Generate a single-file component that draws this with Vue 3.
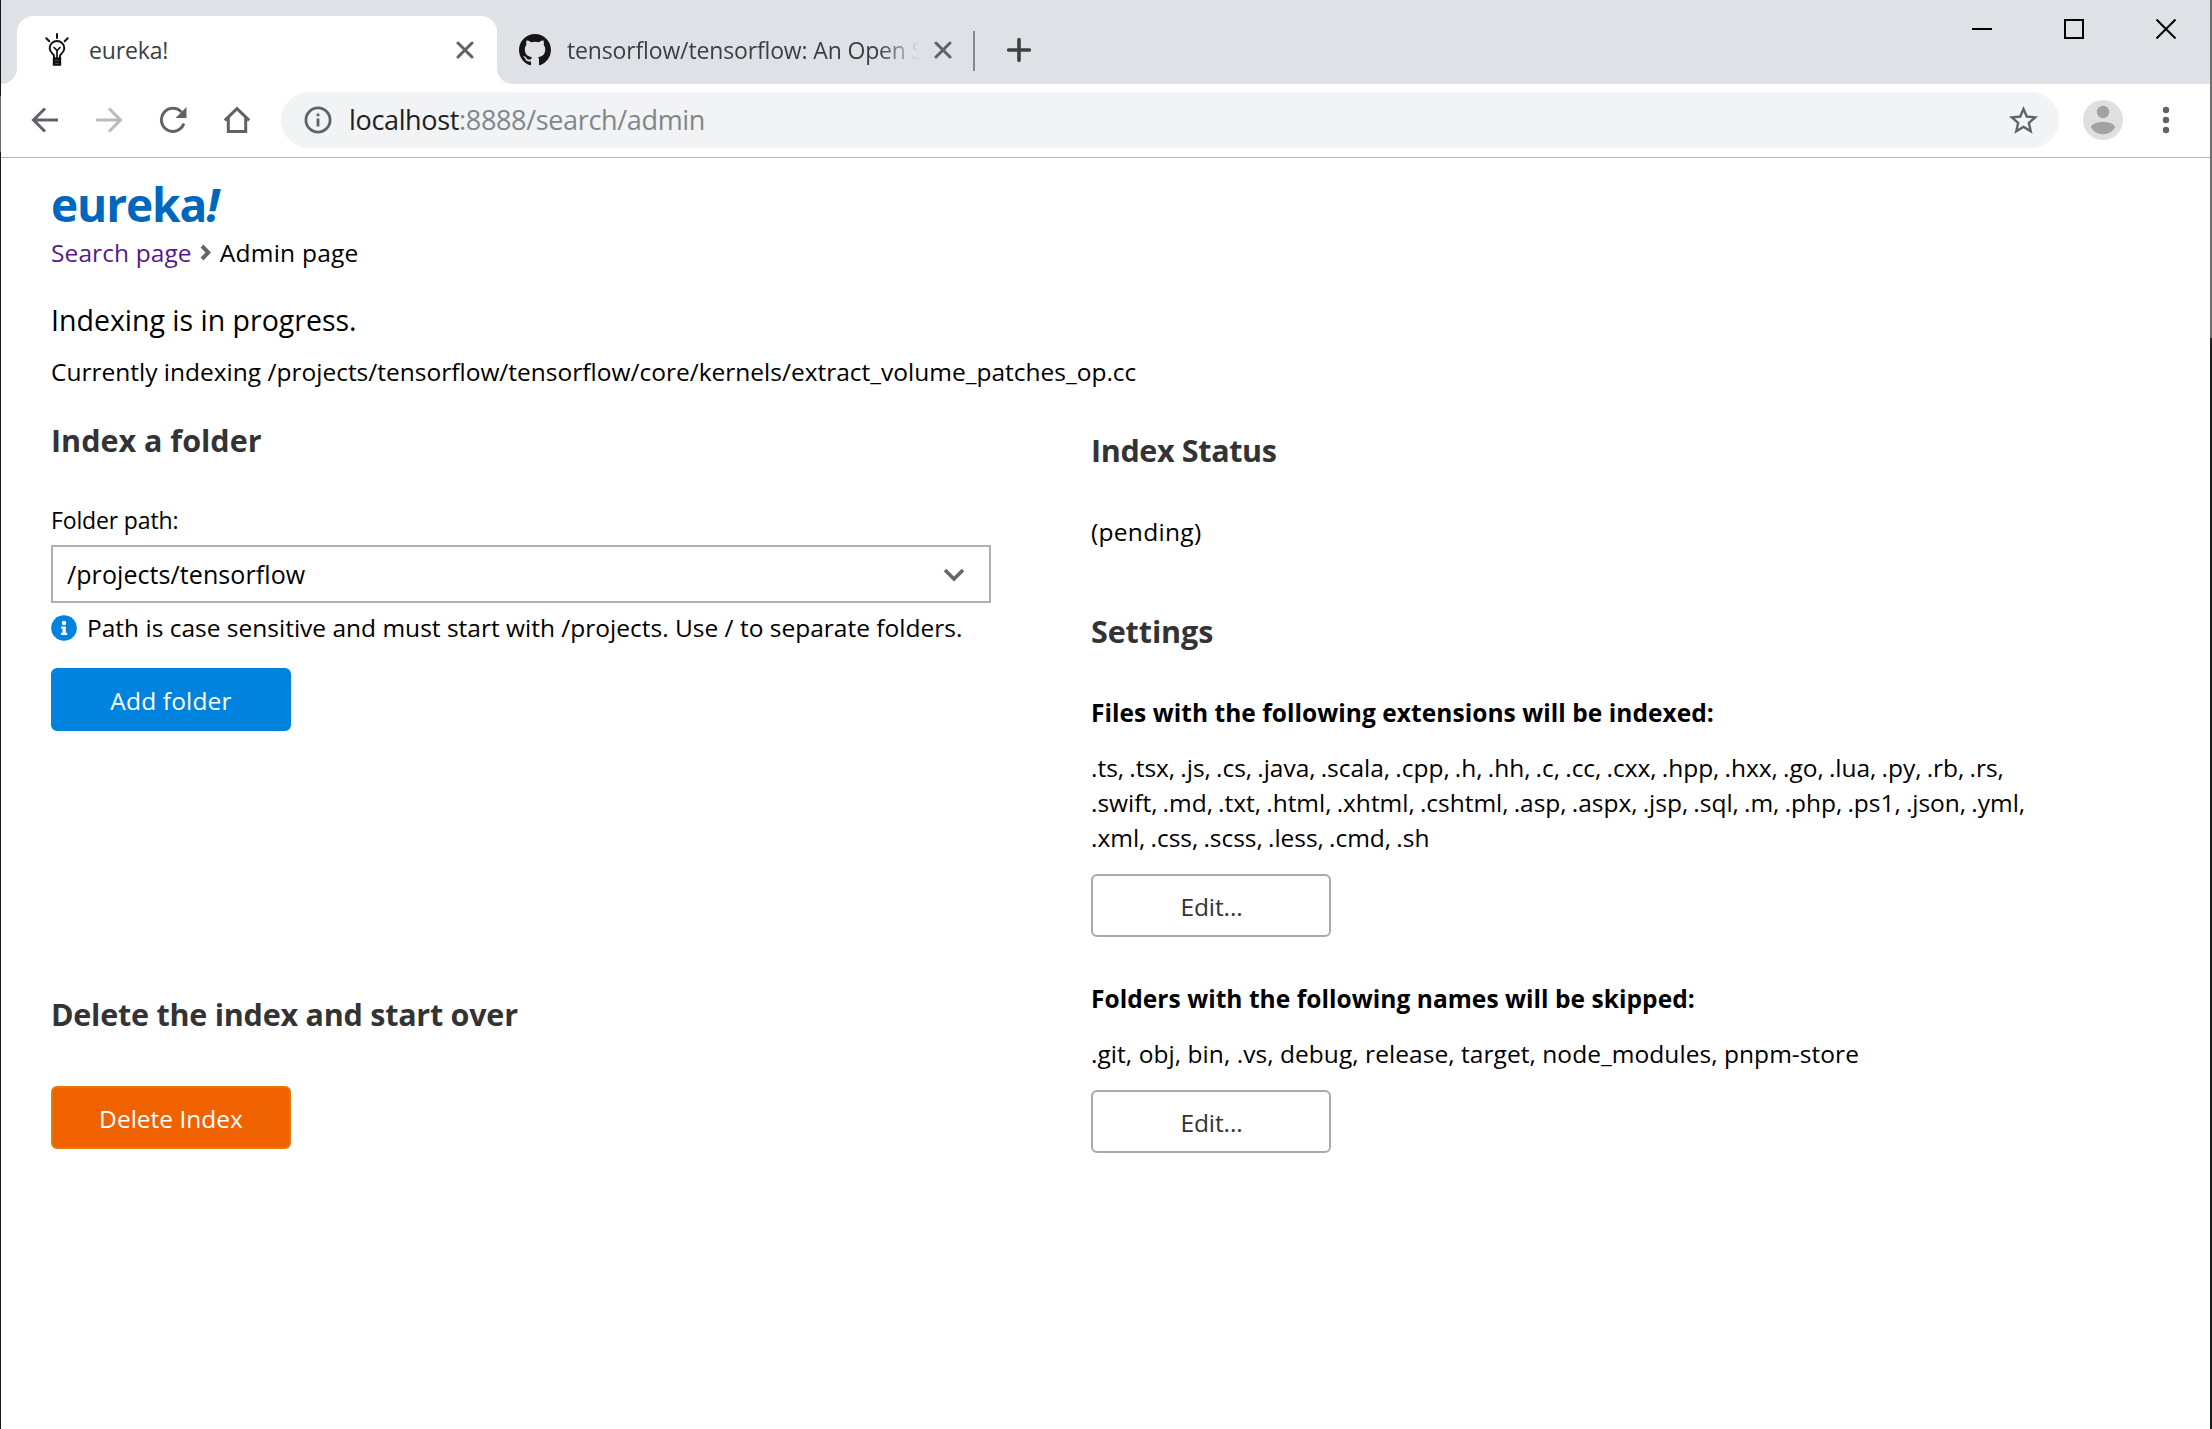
<script setup>
import { ref } from 'vue'

const folderPath = ref('/projects/tensorflow')
const extensions =
  '.ts, .tsx, .js, .cs, .java, .scala, .cpp, .h, .hh, .c, .cc, .cxx, .hpp, .hxx, .go, .lua, .py, .rb, .rs, .swift, .md, .txt, .html, .xhtml, .cshtml, .asp, .aspx, .jsp, .sql, .m, .php, .ps1, .json, .yml, .xml, .css, .scss, .less, .cmd, .sh'
const skipped = '.git, obj, bin, .vs, debug, release, target, node_modules, pnpm-store'
</script>

<template>
  <div class="window">
    <header class="tabstrip">
      <div class="tab active">
        <svg class="favicon bulb" viewBox="0 0 24 34" fill="none" stroke="#111" stroke-width="2" stroke-linecap="round">
          <path d="M12 1v4M1.3 5.3l3 3M22.7 5.3l-3 3" />
          <path d="M9 25.5v-2.8C8.600 20.800 4.700 19.500 4.700 15.300a7.300 7.300 0 0 1 14.600 0c0 4.200-3.900 5.500-4.300 7.400v2.800z" />
          <path d="M9 14.500l3 3 3-3M12 17.500v7" stroke-width="1.700" />
          <path d="M9 26h6v5.500H9zM9 28.800h6" stroke-width="2.400" />
        </svg>
        <span class="tab-title first">eureka!</span>
        <svg class="tab-close" viewBox="0 0 18 18"><path d="M2 2l14 14M16 2L2 16" /></svg>
      </div>
      <div class="tab background">
        <svg class="favicon github" viewBox="0 0 16 16" fill="#171515">
          <path d="M8 0C3.580 0 0 3.580 0 8c0 3.540 2.290 6.530 5.470 7.590.4.070.55-.17.55-.38 0-.19-.01-.82-.01-1.490-2.010.37-2.530-.49-2.690-.94-.09-.23-.48-.94-.82-1.130-.28-.15-.68-.52-.01-.53.63-.01 1.080.58 1.230.82.72 1.210 1.870.87 2.330.66.07-.52.28-.87.51-1.070-1.780-.2-3.640-.89-3.640-3.950 0-.87.31-1.590.82-2.150-.08-.2-.36-1.020.08-2.120 0 0 .67-.21 2.200.82.64-.18 1.320-.27 2-.27s1.360.09 2 .27c1.530-1.040 2.200-.82 2.200-.82.44 1.100.16 1.920.08 2.120.51.56.82 1.270.82 2.150 0 3.070-1.870 3.750-3.650 3.950.29.25.54.73.54 1.480 0 1.070-.01 1.930-.01 2.200 0 .21.15.46.55.38A8.010 8.010 0 0 0 16 8c0-4.420-3.580-8-8-8z" />
        </svg>
        <span class="tab-title second">tensorflow/tensorflow: An Open S</span>
        <svg class="tab-close" viewBox="0 0 18 18"><path d="M2 2l14 14M16 2L2 16" /></svg>
      </div>
      <span class="separator"></span>
      <svg class="new-tab" viewBox="0 0 24 24"><path d="M12 1.700v20.600M1.700 12h20.600" /></svg>
      <div class="controls">
        <svg viewBox="0 0 20 20"><path d="M0 10h20" /></svg>
        <svg viewBox="0 0 20 20"><path d="M1 1h18v18H1z" /></svg>
        <svg viewBox="0 0 20 20"><path d="M.5.5l19 19M19.500.5l-19 19" /></svg>
      </div>
    </header>

    <nav class="toolbar">
      <svg class="nav-icon" viewBox="0 0 28 28"><path d="M27 14H3M14 2.500L2.500 14 14 25.500" /></svg>
      <svg class="nav-icon disabled" viewBox="0 0 28 28"><path d="M1 14h24M14 2.500L25.500 14 14 25.500" /></svg>
      <svg class="nav-icon" viewBox="0 0 28 28">
        <path d="M24.800 17.500A11.500 11.500 0 1 1 22.400 6.100" />
        <path d="M27.500 1v11h-11z" fill="#5f6368" stroke="none" />
      </svg>
      <svg class="nav-icon" viewBox="0 0 28 28"><path d="M1.800 14.300L14 2.600l12.200 11.700M5.300 11.500v14h17.400v-14" /></svg>
      <div class="omnibox">
        <svg class="site-info" viewBox="0 0 28 28">
          <circle cx="14" cy="14" r="12.100" fill="none" stroke="#5f6368" stroke-width="2.800" />
          <path d="M12.600 12.500h2.800v8h-2.800zM12.600 7.500h2.800v2.800h-2.800z" fill="#5f6368" />
        </svg>
        <span class="url">localhost<span class="path">:8888/search/admin</span></span>
        <svg class="star" viewBox="0 0 24 24">
          <path fill="#5f6368" d="M22 9.240l-7.190-.62L12 2 9.190 8.630 2 9.240l5.460 4.730L5.820 21 12 17.270 18.180 21l-1.630-7.030L22 9.240zM12 15.400l-3.760 2.270 1-4.280-3.320-2.880 4.380-.38L12 6.100l1.710 4.040 4.380.38-3.320 2.880 1 4.280L12 15.400z" />
        </svg>
      </div>
      <svg class="avatar" viewBox="0 0 40 40">
        <circle cx="20" cy="20" r="20" fill="#dfdfdf" />
        <circle cx="20" cy="12" r="6.200" fill="#a2a2a2" />
        <path d="M8 27.500c0-3.300 6-5.500 12-5.500s12 2.200 12 5.500c-2 3.700-6.500 6.700-12 6.700S10 31.200 8 27.500z" fill="#a2a2a2" />
      </svg>
      <svg class="kebab" viewBox="0 0 8 28" fill="#5f6368">
        <circle cx="4" cy="4" r="3.200" /><circle cx="4" cy="14" r="3.200" /><circle cx="4" cy="24" r="3.200" />
      </svg>
    </nav>

    <main class="page">
      <h1 class="brand">eureka<em>!</em></h1>
      <div class="crumbs">
        <a class="crumb-link">Search page</a>
        <svg class="crumb-sep" viewBox="0 0 11 17"><path d="M2 2l6.300 6.500L2 15" /></svg>
        <span class="crumb-here">Admin page</span>
      </div>
      <p class="status">Indexing is in progress.</p>
      <p class="current">Currently indexing /projects/tensorflow/tensorflow/core/kernels/extract_volume_patches_op.cc</p>

      <div class="columns">
        <section class="left">
          <h2>Index a folder</h2>
          <label class="label">Folder path:</label>
          <div class="select">
            <span>{{ folderPath }}</span>
            <svg class="caret" viewBox="0 0 22 14"><path d="M2 2l9 9 9-9" /></svg>
          </div>
          <div class="hint">
            <svg viewBox="0 0 26 26">
              <circle cx="13" cy="13" r="12.800" fill="#0082df" />
              <circle cx="13" cy="8" r="2.200" fill="#fff" />
              <path d="M10.200 11.500h4.600v6.200h1.400v2.200H10v-2.200h1.500v-4h-1.300z" fill="#fff" />
            </svg>
            <span>Path is case sensitive and must start with /projects. Use / to separate folders.</span>
          </div>
          <button class="btn primary">Add folder</button>
          <h2 class="delete-title">Delete the index and start over</h2>
          <button class="btn danger">Delete Index</button>
        </section>

        <section class="right">
          <h2 class="status-title">Index Status</h2>
          <p class="pending">(pending)</p>
          <h2 class="settings-title">Settings</h2>
          <h3>Files with the following extensions will be indexed:</h3>
          <p class="list ext">{{ extensions }}</p>
          <button class="btn plain">Edit...</button>
          <h3 class="skip-title">Folders with the following names will be skipped:</h3>
          <p class="list">{{ skipped }}</p>
          <button class="btn plain">Edit...</button>
        </section>
      </div>
    </main>
  </div>
</template>

<style>
html,
body {
  margin: 0;
  background: #fff;
}
</style>

<style scoped>
.window {
  box-sizing: border-box;
  width: 2212px;
  height: 1429px;
  overflow: hidden;
  padding: 0 2px 0 1px;
  /* desktop showing past the window's left and right edges */
  background:
    linear-gradient(#17191d 96px, #6b6b6b 96px 152px, #17191d 152px) left / 1px 100% no-repeat,
    linear-gradient(#6e6e6e 338px, #1c1f20 338px) right / 2px 100% no-repeat,
    #fff;
  color: #000;
  font-family: "Open Sans", "Noto Sans", sans-serif;
  font-size: 24.5px;
  line-height: 35px;
}

svg {
  display: block;
  flex: none;
}

h1,
h2,
h3,
p {
  margin: 0;
}

/* Tab strip */
.tabstrip {
  display: flex;
  box-sizing: border-box;
  height: 84px;
  padding: 16px 34px 0 16px;
  background: #dee1e6;
}

.tab {
  display: flex;
  align-items: center;
  box-sizing: border-box;
  height: 68px;
}

.tab.active {
  position: relative;
  width: 480px;
  padding: 0 23px 0 28px;
  border-radius: 16px 16px 0 0;
  background: #fff;
}

.tab.active::before,
.tab.active::after {
  content: "";
  position: absolute;
  bottom: 0;
  width: 16px;
  height: 16px;
}

.tab.active::before {
  right: 100%;
  background: radial-gradient(circle at 0 0, transparent 15.5px, #fff 16.5px);
}

.tab.active::after {
  left: 100%;
  background: radial-gradient(circle at 100% 0, transparent 15.5px, #fff 16.5px);
}

.tab.background {
  width: 476px;
  padding: 0 21px 0 22px;
}

.bulb {
  width: 24px;
  height: 34px;
}

.github {
  width: 32px;
  height: 32px;
}

.tab-title {
  color: #3c4043;
  font-size: 23px;
  letter-spacing: -0.15px;
  white-space: nowrap;
}

.first {
  flex: 1;
  margin-left: 20px;
}

.second {
  width: 362px;
  margin-left: 16px;
  mask-image: linear-gradient(to right, #000 312px, transparent 352px);
}

.tab-close {
  width: 18px;
  height: 18px;
  margin-left: auto;
  fill: none;
  stroke: #5f6368;
  stroke-width: 3;
  stroke-linecap: round;
}

.separator {
  width: 2px;
  height: 40px;
  margin-top: 15px;
  background: #85888c;
}

.new-tab {
  width: 24px;
  height: 24px;
  margin: 22px 0 0 32px;
  fill: none;
  stroke: #3c4043;
  stroke-width: 3.6;
  stroke-linecap: round;
}

.controls {
  display: flex;
  gap: 72px;
  margin: 3px 0 0 auto;
}

.controls svg {
  width: 20px;
  height: 20px;
  fill: none;
  stroke: #000;
  stroke-width: 2;
}

/* Toolbar */
.toolbar {
  display: flex;
  align-items: center;
  box-sizing: border-box;
  height: 74px;
  padding: 0 40px 1px 30px;
  border-bottom: 1px solid #b0b2b4;
}

.nav-icon {
  width: 28px;
  height: 28px;
  margin-right: 36px;
  fill: none;
  stroke: #5f6368;
  stroke-width: 3;
}

.nav-icon.disabled {
  stroke: #bababc;
}

.omnibox {
  display: flex;
  flex: 1;
  align-items: center;
  height: 56px;
  margin-left: -6px;
  padding: 0 18px 0 23px;
  border-radius: 28px;
  background: #f1f3f4;
}

.site-info {
  width: 28px;
  height: 28px;
}

.url {
  flex: 1;
  margin-left: 17px;
  padding-bottom: 2px;
  color: #202124;
  font-size: 27px;
  letter-spacing: -0.34px;
}

.path {
  color: #80868b;
}

.star {
  width: 35px;
  height: 35px;
}

.avatar {
  width: 40px;
  height: 40px;
  margin: 0 39px 0 24px;
}

.kebab {
  width: 8px;
  height: 28px;
}

/* Page */
.page {
  padding: 16px 0 0 50px;
}

.brand {
  color: #0067be;
  font-size: 46px;
  font-weight: 700;
  line-height: 61px;
  letter-spacing: -1.1px;
}

.crumbs {
  display: flex;
  align-items: center;
}

.crumb-link {
  color: #551a8b;
  letter-spacing: 0.1px;
}

.crumb-sep {
  width: 11px;
  height: 17px;
  margin: 0 9px 0 8px;
  fill: none;
  stroke: #666;
  stroke-width: 4;
}

.crumb-here {
  letter-spacing: 0.25px;
}

.status {
  margin-top: 30px;
  font-size: 28.5px;
  line-height: 40px;
}

.current {
  margin-top: 14px;
}

.columns {
  display: flex;
  gap: 100px;
  padding-top: 1px;
}

.left {
  width: 940px;
}

.right {
  width: 950px;
}

h2 {
  margin-top: 29px;
  color: #333;
  font-size: 30.5px;
  font-weight: 700;
  line-height: 42px;
}

h3 {
  margin-top: 43px;
  font-size: 24.5px;
  font-weight: 700;
  letter-spacing: 0.05px;
}

.label {
  display: block;
  margin-top: 42px;
  font-size: 23px;
  letter-spacing: -0.15px;
}

.select {
  display: flex;
  align-items: center;
  justify-content: space-between;
  box-sizing: border-box;
  height: 58px;
  margin-top: 7px;
  padding: 0 24px 0 14px;
  border: 2px solid #b0b0b0;
  font-size: 25px;
  letter-spacing: 0.08px;
}

.caret {
  width: 22px;
  height: 14px;
  margin-top: 2px;
  fill: none;
  stroke: #666;
  stroke-width: 3.6;
}

.hint {
  display: flex;
  align-items: center;
  gap: 10px;
  margin-top: 7px;
}

.hint svg {
  width: 26px;
  height: 26px;
}

.btn {
  display: block;
  box-sizing: border-box;
  width: 240px;
  height: 63px;
  margin: 19px 0 0;
  padding: 2px 0 0;
  border: 2px solid #aaa;
  border-radius: 6px;
  font: inherit;
}

.primary {
  margin-top: 23px;
  border-color: #0082df;
  background: #0082df;
  color: #fff;
  letter-spacing: 0.15px;
}

.danger {
  margin-top: 51px;
  border-color: #e27c00;
  background: #f06200;
  color: #fff;
}

.plain {
  padding-left: 1px;
  background: #fff;
  color: #333;
  letter-spacing: -0.1px;
}

.delete-title {
  margin-top: 262px;
  letter-spacing: -0.24px;
}

.status-title {
  margin-top: 39px;
  letter-spacing: -0.36px;
}

.pending {
  margin-top: 43px;
  letter-spacing: 0.3px;
}

.settings-title {
  margin-top: 61px;
  letter-spacing: -0.1px;
}

.skip-title {
  margin-top: 44px;
}

.list {
  margin-top: 20px;
  letter-spacing: 0.05px;
}

.ext {
  letter-spacing: -0.02px;
  word-spacing: -1.2px;
}
</style>
